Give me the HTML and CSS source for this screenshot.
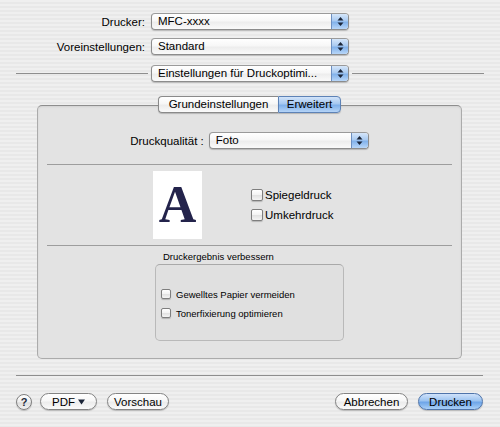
FILE: index.html
```html
<!DOCTYPE html>
<html lang="de">
<head>
<meta charset="utf-8">
<title>Drucken</title>
<link rel="stylesheet" href="styles.css">
</head>
<body>
<div class="dialog">
  <div class="settings">
    <div class="field-row">
      <span class="field-label">Drucker:</span>
      <div class="popup popup-main">
        <span class="popup-text">MFC-xxxx</span>
        <span class="popup-arrows"><svg width="7" height="11" viewBox="0 0 7 11"><polygon points="0.5,4.5 3.5,1 6.5,4.5" /><polygon points="0.5,6.5 3.5,10 6.5,6.5" /></svg></span>
      </div>
    </div>
    <div class="field-row field-row-last">
      <span class="field-label">Voreinstellungen:</span>
      <div class="popup popup-main">
        <span class="popup-text">Standard</span>
        <span class="popup-arrows"><svg width="7" height="11" viewBox="0 0 7 11"><polygon points="0.5,4.5 3.5,1 6.5,4.5" /><polygon points="0.5,6.5 3.5,10 6.5,6.5" /></svg></span>
      </div>
    </div>
    <div class="pane-row">
      <span class="rule"></span>
      <div class="popup popup-main">
        <span class="popup-text">Einstellungen für Druckoptimi...</span>
        <span class="popup-arrows"><svg width="7" height="11" viewBox="0 0 7 11"><polygon points="0.5,4.5 3.5,1 6.5,4.5" /><polygon points="0.5,6.5 3.5,10 6.5,6.5" /></svg></span>
      </div>
      <span class="rule"></span>
    </div>
  </div>

  <div class="tabview">
    <div class="tabs">
      <span class="tab tab-first">Grundeinstellungen</span>
      <span class="tab tab-active">Erweitert</span>
    </div>
    <div class="panel">
      <div class="quality-row">
        <span class="quality-label">Druckqualität :</span>
        <div class="popup popup-quality">
          <span class="popup-text">Foto</span>
          <span class="popup-arrows"><svg width="7" height="11" viewBox="0 0 7 11"><polygon points="0.5,4.5 3.5,1 6.5,4.5" /><polygon points="0.5,6.5 3.5,10 6.5,6.5" /></svg></span>
        </div>
      </div>
      <div class="sep"></div>
      <div class="preview-row">
        <div class="preview"><span class="preview-letter">A</span></div>
        <div class="options">
          <div class="check"><span class="checkbox"></span><span>Spiegeldruck</span></div>
          <div class="check"><span class="checkbox"></span><span>Umkehrdruck</span></div>
        </div>
      </div>
      <div class="sep sep-second"></div>
      <div class="group">
        <div class="group-title">Druckergebnis verbessern</div>
        <div class="group-box">
          <div class="check check-small"><span class="checkbox"></span><span>Gewelltes Papier vermeiden</span></div>
          <div class="check check-small"><span class="checkbox"></span><span>Tonerfixierung optimieren</span></div>
        </div>
      </div>
    </div>
  </div>

  <div class="bottom-rule"></div>

  <div class="buttons">
    <span class="help">?</span>
    <span class="btn btn-pdf">PDF <svg width="7" height="6" viewBox="0 0 7 6"><polygon points="0,0.5 7,0.5 3.5,5.5" /></svg></span>
    <span class="btn btn-preview">Vorschau</span>
    <span class="spacer"></span>
    <span class="btn btn-cancel">Abbrechen</span>
    <span class="btn btn-default">Drucken</span>
  </div>
</div>
</body>
</html>
```
FILE: styles.css
```css
html, body {
  margin: 0;
  padding: 0;
}

body {
  width: 500px;
  height: 427px;
  overflow: hidden;
  font-family: "Liberation Sans", Arial, sans-serif;
  font-size: 11.5px;
  color: #000;
  background: repeating-linear-gradient(#efefef 0 2px, #e8e8e8 2px 4px);
}

.settings {
  padding-top: 13px;
}

.field-row {
  display: flex;
  align-items: center;
  height: 17px;
  margin-bottom: 8px;
}

.field-row-last {
  margin-bottom: 10px;
}

.field-label {
  width: 145px;
  text-align: right;
  margin-right: 6px;
  white-space: nowrap;
}

.popup {
  display: flex;
  align-items: stretch;
  height: 17px;
  box-sizing: border-box;
  border: 1px solid #8c8c8c;
  border-top-color: #9a9a9a;
  border-radius: 4px;
  background: linear-gradient(#ffffff, #f7f7f7 45%, #ededed 55%, #fafafa);
  box-shadow: 0 1px 1px rgba(0, 0, 0, 0.2);
  overflow: hidden;
}

.popup-main {
  width: 198px;
}

.popup-quality {
  width: 160px;
}

.popup-text {
  flex: 1;
  padding-left: 6px;
  line-height: 15px;
  white-space: nowrap;
  overflow: hidden;
}

.popup-arrows {
  width: 16px;
  border-left: 1px solid #6d8fc0;
  background: linear-gradient(#d5e6fa, #a9caf1 45%, #82b2eb 55%, #b8d6f8);
  display: flex;
  align-items: center;
  justify-content: center;
}

.popup-arrows svg {
  fill: #1b2538;
}

.pane-row {
  display: flex;
  align-items: center;
  height: 17px;
  padding: 0 16px;
}

.pane-row .popup {
  margin: 0 3px;
}

.rule {
  flex: 1;
  height: 1px;
  background: #8e8e8e;
}

.tabview {
  margin: 14px 38px 0 37px;
}

.tabs {
  display: flex;
  justify-content: center;
  position: relative;
  z-index: 1;
  height: 17px;
}

.tab {
  display: block;
  height: 17px;
  box-sizing: border-box;
  line-height: 15px;
  text-align: center;
  border: 1px solid #8a8a8a;
  background: linear-gradient(#ffffff, #f7f7f7 45%, #ececec 55%, #fafafa);
  box-shadow: 0 1px 1px rgba(0, 0, 0, 0.2);
  white-space: nowrap;
}

.tab-first {
  width: 120px;
  border-radius: 4px 0 0 4px;
  border-right: 0;
}

.tab-active {
  width: 63px;
  border-radius: 0 4px 4px 0;
  border-color: #5d82b6;
  background: linear-gradient(#d2e4fa, #a6c8f0 45%, #7fb0ea 55%, #b5d4f7);
}

.panel {
  margin-top: -8px;
  height: 254px;
  box-sizing: border-box;
  padding-top: 26px;
  border: 1px solid #ababab;
  border-top-color: #8e8e8e;
  border-radius: 5px;
  background: #e3e3e3;
  box-shadow: inset 0 1px 2px rgba(0, 0, 0, 0.08);
}

.quality-row {
  display: flex;
  justify-content: center;
  align-items: center;
  height: 17px;
}

.quality-label {
  margin-right: 5px;
  white-space: nowrap;
}

.sep {
  margin: 15px 9px 0 9px;
  height: 1px;
  background: #9d9d9d;
}

.sep-second {
  margin-top: 6px;
}

.preview-row {
  display: flex;
  align-items: center;
  margin-top: 6px;
  padding-left: 115px;
}

.preview {
  width: 49px;
  height: 68px;
  background: #ffffff;
  display: flex;
  align-items: center;
  justify-content: center;
}

.preview-letter {
  font-family: "Liberation Serif", "Times New Roman", serif;
  font-weight: bold;
  font-size: 52px;
  line-height: 1;
  color: #23234b;
}

.options {
  margin-left: 49px;
  display: flex;
  flex-direction: column;
  gap: 8px;
}

.check {
  display: flex;
  align-items: center;
  height: 12px;
  white-space: nowrap;
}

.checkbox {
  width: 12px;
  height: 12px;
  box-sizing: border-box;
  margin-right: 2px;
  border: 1px solid #7e7e7e;
  border-radius: 2px;
  background: linear-gradient(#ffffff, #f2f2f2 50%, #e2e2e2 55%, #f4f4f4);
  box-shadow: 0 1px 1px rgba(0, 0, 0, 0.2);
}

.group {
  margin-left: 117px;
  width: 189px;
}

.group-title {
  margin-top: 5px;
  padding-left: 8px;
  font-size: 9.5px;
  line-height: 12px;
  white-space: nowrap;
}

.group-box {
  margin-top: 1px;
  height: 77px;
  box-sizing: border-box;
  padding: 24px 0 0 5px;
  border: 1px solid #b9b9b9;
  border-top-color: #a9a9a9;
  border-radius: 5px;
  background: #e0e0e0;
  display: flex;
  flex-direction: column;
  gap: 9px;
}

.check-small {
  height: 10px;
  font-size: 9.5px;
}

.check-small .checkbox {
  width: 10px;
  height: 10px;
  margin-right: 5px;
}

.bottom-rule {
  margin: 16px 17px 0 16px;
  height: 1px;
  background: #8e8e8e;
}

.buttons {
  display: flex;
  align-items: center;
  margin-top: 17px;
  height: 17px;
  padding: 0 17px 0 16px;
}

.help {
  width: 16px;
  height: 16px;
  box-sizing: border-box;
  border: 1px solid #7f7f7f;
  border-radius: 50%;
  background: linear-gradient(#ffffff, #eeeeee 50%, #dcdcdc 55%, #f2f2f2);
  box-shadow: 0 1px 1px rgba(0, 0, 0, 0.2);
  font-weight: bold;
  font-size: 11px;
  line-height: 14px;
  text-align: center;
  color: #222a3a;
  margin-right: 8px;
}

.btn {
  display: flex;
  align-items: center;
  justify-content: center;
  gap: 3px;
  height: 17px;
  box-sizing: border-box;
  border: 1px solid #838383;
  border-radius: 9px;
  background: linear-gradient(#ffffff, #f7f7f7 45%, #ececec 55%, #fafafa);
  box-shadow: 0 1px 1px rgba(0, 0, 0, 0.2);
  white-space: nowrap;
}

.btn svg {
  fill: #1b2538;
}

.btn-pdf {
  width: 57px;
}

.btn-preview {
  width: 62px;
  margin-left: 10px;
}

.spacer {
  flex: 1;
}

.btn-cancel {
  width: 73px;
}

.btn-default {
  width: 65px;
  margin-left: 10px;
  border-color: #4f74aa;
  background: linear-gradient(#cfe2fa, #9cc3f0 45%, #6ea5e8 55%, #a9cff7);
}
```
